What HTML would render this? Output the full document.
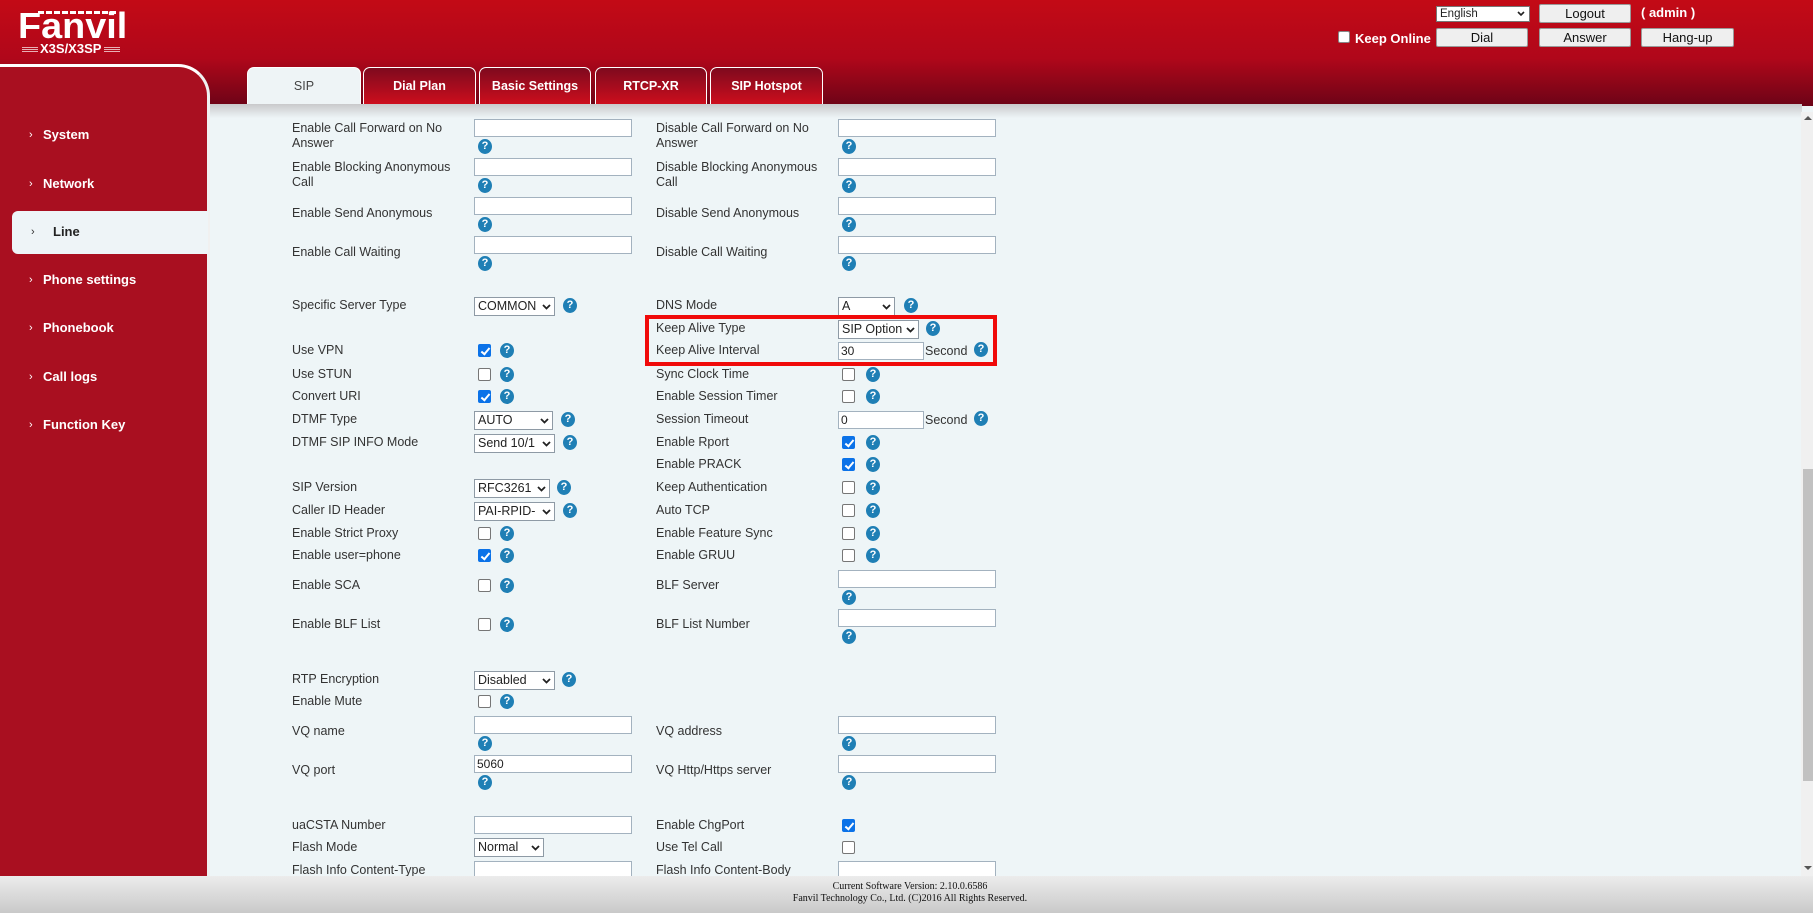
<!DOCTYPE html>
<html><head><meta charset="utf-8"><style>
*{box-sizing:border-box;margin:0;padding:0}
body{width:1813px;height:913px;overflow:hidden;position:relative;background:#eef5f7;font-family:"Liberation Sans",sans-serif}
.a{position:absolute}
.hdr{left:0;top:0;width:1813px;height:106px;background:linear-gradient(to bottom,#c30a16 0%,#b0071a 55%,#6c0417 100%)}
.band{left:208px;top:104px;width:1594px;height:14px;background:linear-gradient(to bottom,#c9c9cb,#eef5f7)}
.side{left:0;top:64px;width:210px;height:812px;background:#a90f20;border-top:3px solid #fff;border-right:3px solid #f0f0f0;border-top-right-radius:32px}
.nav{position:absolute;left:43px;color:#fff;font-weight:bold;font-size:13px}
.chev{position:absolute;left:29px;color:#fff;font-size:11px}
.tab{position:absolute;top:67px;height:39px;border:1px solid #fff;border-bottom:none;border-radius:7px 7px 0 0;background:linear-gradient(to bottom,#7e0a1e,#d10e1d);color:#fff;font-weight:bold;font-size:12.5px;text-align:center;line-height:37px}
.tab.on{background:#eef4f6;color:#444;font-weight:normal}
.L{position:absolute;font-size:12.5px;color:#333;line-height:15px;white-space:nowrap}
.I{position:absolute;width:158px;height:18px;background:#fff;border:1px solid #a3b2bf;font-size:12px;padding-left:2px;line-height:16px;color:#222}
.S{position:absolute;height:19px;background:#fff;border:1px solid #8e9aa5;font-size:12.5px;padding-left:3px;line-height:17px;color:#222;overflow:hidden;white-space:nowrap}
.S svg{position:absolute;right:3px;top:6px}
.C{position:absolute;width:13px;height:13px;border:1px solid #767676;border-radius:2px;background:#fff}
.C.k{background:#0b72e8;border-color:#0b72e8}
.C.k:after{content:"";position:absolute;left:3.5px;top:0.5px;width:3px;height:7px;border:solid #fff;border-width:0 2px 2px 0;transform:rotate(40deg)}
.H{position:absolute;width:14px;height:15px;border-radius:50%;background:#1f7fb5;color:#fff;font-size:11px;font-weight:bold;text-align:center;line-height:15px}
.btn{position:absolute;height:19px;background:#efefef;border:1px solid #9a9a9a;border-radius:2px;font-size:13px;text-align:center;line-height:17px;color:#111}
</style></head><body>
<div class="a hdr"></div>
<!-- logo -->
<div class="a" style="left:38px;top:11px;width:80px;height:3px;background:repeating-linear-gradient(to right,#fff 0 6px,transparent 6px 8px)"></div>
<div class="a" style="left:18px;top:6px;color:#fff;font-weight:bold;font-size:36px;line-height:40px;transform:scaleX(1.05);transform-origin:left">Fanvil</div>
<div class="a" style="left:22px;top:47px;width:16px;height:5px;background:repeating-linear-gradient(to bottom,#e8b0b5 0 1px,transparent 1px 2px)"></div>
<div class="a" style="left:40px;top:42px;color:#fff;font-weight:bold;font-size:13px;line-height:14px">X3S/X3SP</div>
<div class="a" style="left:104px;top:47px;width:16px;height:5px;background:repeating-linear-gradient(to bottom,#e8b0b5 0 1px,transparent 1px 2px)"></div>
<!-- header right -->
<div class="a" style="left:1436px;top:6px;width:94px;height:16px;background:#fff;border:1px solid #777;font-size:11.5px;line-height:14px;padding-left:3px;color:#222">English<svg style="position:absolute;right:4px;top:4px" width="8" height="6"><path d="M1 1l3 3 3-3" stroke="#222" stroke-width="1.6" fill="none"/></svg></div>
<div class="btn" style="left:1539px;top:4px;width:92px">Logout</div>
<div class="a" style="left:1641px;top:5px;color:#fff;font-weight:bold;font-size:13px">( admin )</div>
<div class="a" style="left:1338px;top:31px;width:12px;height:12px;background:#fff;border:1px solid #888;border-radius:2px"></div>
<div class="a" style="left:1355px;top:31px;color:#fff;font-weight:bold;font-size:13px">Keep Online</div>
<div class="btn" style="left:1436px;top:28px;width:92px">Dial</div>
<div class="btn" style="left:1539px;top:28px;width:92px">Answer</div>
<div class="btn" style="left:1641px;top:28px;width:93px">Hang-up</div>
<!-- tabs -->
<div class="tab on" style="left:247px;width:114px">SIP</div>
<div class="tab" style="left:363px;width:113px">Dial Plan</div>
<div class="tab" style="left:479px;width:112px">Basic Settings</div>
<div class="tab" style="left:595px;width:112px">RTCP-XR</div>
<div class="tab" style="left:710px;width:113px">SIP Hotspot</div>
<div class="a band"></div>
<!-- sidebar -->
<div class="a side"></div>
<div class="a" style="left:12px;top:211px;width:196px;height:43px;background:#eef4f7;border-radius:6px 0 0 6px"></div>
<span class="chev" style="top:129px">›</span><span class="nav" style="top:127px">System</span>
<span class="chev" style="top:178px">›</span><span class="nav" style="top:176px">Network</span>
<span class="chev" style="top:226px;color:#333;left:31px">›</span><span class="nav" style="top:224px;color:#222;left:53px">Line</span>
<span class="chev" style="top:274px">›</span><span class="nav" style="top:272px">Phone settings</span>
<span class="chev" style="top:322px">›</span><span class="nav" style="top:320px">Phonebook</span>
<span class="chev" style="top:371px">›</span><span class="nav" style="top:369px">Call logs</span>
<span class="chev" style="top:419px">›</span><span class="nav" style="top:417px">Function Key</span>

<!-- content -->
<div class="L" style="left:292px;top:121px">Enable Call Forward on No<br>Answer</div>
<div class="I" style="left:474px;top:119px"></div><div class="H" style="left:478px;top:139px">?</div>
<div class="L" style="left:656px;top:121px">Disable Call Forward on No<br>Answer</div>
<div class="I" style="left:838px;top:119px"></div><div class="H" style="left:842px;top:139px">?</div>

<div class="L" style="left:292px;top:160px">Enable Blocking Anonymous<br>Call</div>
<div class="I" style="left:474px;top:158px"></div><div class="H" style="left:478px;top:178px">?</div>
<div class="L" style="left:656px;top:160px">Disable Blocking Anonymous<br>Call</div>
<div class="I" style="left:838px;top:158px"></div><div class="H" style="left:842px;top:178px">?</div>

<div class="L" style="left:292px;top:206px">Enable Send Anonymous</div>
<div class="I" style="left:474px;top:197px"></div><div class="H" style="left:478px;top:217px">?</div>
<div class="L" style="left:656px;top:206px">Disable Send Anonymous</div>
<div class="I" style="left:838px;top:197px"></div><div class="H" style="left:842px;top:217px">?</div>

<div class="L" style="left:292px;top:245px">Enable Call Waiting</div>
<div class="I" style="left:474px;top:236px"></div><div class="H" style="left:478px;top:256px">?</div>
<div class="L" style="left:656px;top:245px">Disable Call Waiting</div>
<div class="I" style="left:838px;top:236px"></div><div class="H" style="left:842px;top:256px">?</div>

<div class="L" style="left:292px;top:298px">Specific Server Type</div>
<div class="S" style="left:474px;top:297px;width:81px">COMMON<svg width="9" height="6"><path d="M1 1l3.5 3.5L8 1" stroke="#222" stroke-width="1.8" fill="none"/></svg></div><div class="H" style="left:563px;top:298px">?</div>
<div class="L" style="left:656px;top:298px">DNS Mode</div>
<div class="S" style="left:838px;top:297px;width:57px">A<svg width="9" height="6"><path d="M1 1l3.5 3.5L8 1" stroke="#222" stroke-width="1.8" fill="none"/></svg></div><div class="H" style="left:904px;top:298px">?</div>

<div class="a" style="left:645px;top:315px;width:352px;height:51px;border:4px solid #f00a0a"></div>
<div class="L" style="left:656px;top:321px">Keep Alive Type</div>
<div class="S" style="left:838px;top:320px;width:81px">SIP Option<svg width="9" height="6"><path d="M1 1l3.5 3.5L8 1" stroke="#222" stroke-width="1.8" fill="none"/></svg></div><div class="H" style="left:926px;top:321px">?</div>

<div class="L" style="left:292px;top:343px">Use VPN</div>
<div class="C k" style="left:478px;top:344px"></div><div class="H" style="left:500px;top:343px">?</div>
<div class="L" style="left:656px;top:343px">Keep Alive Interval</div>
<div class="I" style="left:838px;top:342px;width:86px">30</div><div class="L" style="left:925px;top:344px">Second</div><div class="H" style="left:974px;top:342px">?</div>

<div class="L" style="left:292px;top:367px">Use STUN</div>
<div class="C" style="left:478px;top:368px"></div><div class="H" style="left:500px;top:367px">?</div>
<div class="L" style="left:656px;top:367px">Sync Clock Time</div>
<div class="C" style="left:842px;top:368px"></div><div class="H" style="left:866px;top:367px">?</div>

<div class="L" style="left:292px;top:389px">Convert URI</div>
<div class="C k" style="left:478px;top:390px"></div><div class="H" style="left:500px;top:389px">?</div>
<div class="L" style="left:656px;top:389px">Enable Session Timer</div>
<div class="C" style="left:842px;top:390px"></div><div class="H" style="left:866px;top:389px">?</div>

<div class="L" style="left:292px;top:412px">DTMF Type</div>
<div class="S" style="left:474px;top:411px;width:79px">AUTO<svg width="9" height="6"><path d="M1 1l3.5 3.5L8 1" stroke="#222" stroke-width="1.8" fill="none"/></svg></div><div class="H" style="left:561px;top:412px">?</div>
<div class="L" style="left:656px;top:412px">Session Timeout</div>
<div class="I" style="left:838px;top:411px;width:86px">0</div><div class="L" style="left:925px;top:413px">Second</div><div class="H" style="left:974px;top:411px">?</div>

<div class="L" style="left:292px;top:435px">DTMF SIP INFO Mode</div>
<div class="S" style="left:474px;top:434px;width:81px">Send 10/1<svg width="9" height="6"><path d="M1 1l3.5 3.5L8 1" stroke="#222" stroke-width="1.8" fill="none"/></svg></div><div class="H" style="left:563px;top:435px">?</div>
<div class="L" style="left:656px;top:435px">Enable Rport</div>
<div class="C k" style="left:842px;top:436px"></div><div class="H" style="left:866px;top:435px">?</div>

<div class="L" style="left:656px;top:457px">Enable PRACK</div>
<div class="C k" style="left:842px;top:458px"></div><div class="H" style="left:866px;top:457px">?</div>

<div class="L" style="left:292px;top:480px">SIP Version</div>
<div class="S" style="left:474px;top:479px;width:76px">RFC3261<svg width="9" height="6"><path d="M1 1l3.5 3.5L8 1" stroke="#222" stroke-width="1.8" fill="none"/></svg></div><div class="H" style="left:557px;top:480px">?</div>
<div class="L" style="left:656px;top:480px">Keep Authentication</div>
<div class="C" style="left:842px;top:481px"></div><div class="H" style="left:866px;top:480px">?</div>

<div class="L" style="left:292px;top:503px">Caller ID Header</div>
<div class="S" style="left:474px;top:502px;width:81px">PAI-RPID-<svg width="9" height="6"><path d="M1 1l3.5 3.5L8 1" stroke="#222" stroke-width="1.8" fill="none"/></svg></div><div class="H" style="left:563px;top:503px">?</div>
<div class="L" style="left:656px;top:503px">Auto TCP</div>
<div class="C" style="left:842px;top:504px"></div><div class="H" style="left:866px;top:503px">?</div>

<div class="L" style="left:292px;top:526px">Enable Strict Proxy</div>
<div class="C" style="left:478px;top:527px"></div><div class="H" style="left:500px;top:526px">?</div>
<div class="L" style="left:656px;top:526px">Enable Feature Sync</div>
<div class="C" style="left:842px;top:527px"></div><div class="H" style="left:866px;top:526px">?</div>

<div class="L" style="left:292px;top:548px">Enable user=phone</div>
<div class="C k" style="left:478px;top:549px"></div><div class="H" style="left:500px;top:548px">?</div>
<div class="L" style="left:656px;top:548px">Enable GRUU</div>
<div class="C" style="left:842px;top:549px"></div><div class="H" style="left:866px;top:548px">?</div>

<div class="L" style="left:292px;top:578px">Enable SCA</div>
<div class="C" style="left:478px;top:579px"></div><div class="H" style="left:500px;top:578px">?</div>
<div class="L" style="left:656px;top:578px">BLF Server</div>
<div class="I" style="left:838px;top:570px"></div><div class="H" style="left:842px;top:590px">?</div>

<div class="L" style="left:292px;top:617px">Enable BLF List</div>
<div class="C" style="left:478px;top:618px"></div><div class="H" style="left:500px;top:617px">?</div>
<div class="L" style="left:656px;top:617px">BLF List Number</div>
<div class="I" style="left:838px;top:609px"></div><div class="H" style="left:842px;top:629px">?</div>

<div class="L" style="left:292px;top:672px">RTP Encryption</div>
<div class="S" style="left:474px;top:671px;width:81px">Disabled<svg width="9" height="6"><path d="M1 1l3.5 3.5L8 1" stroke="#222" stroke-width="1.8" fill="none"/></svg></div><div class="H" style="left:562px;top:672px">?</div>

<div class="L" style="left:292px;top:694px">Enable Mute</div>
<div class="C" style="left:478px;top:695px"></div><div class="H" style="left:500px;top:694px">?</div>

<div class="L" style="left:292px;top:724px">VQ name</div>
<div class="I" style="left:474px;top:716px"></div><div class="H" style="left:478px;top:736px">?</div>
<div class="L" style="left:656px;top:724px">VQ address</div>
<div class="I" style="left:838px;top:716px"></div><div class="H" style="left:842px;top:736px">?</div>

<div class="L" style="left:292px;top:763px">VQ port</div>
<div class="I" style="left:474px;top:755px">5060</div><div class="H" style="left:478px;top:775px">?</div>
<div class="L" style="left:656px;top:763px">VQ Http/Https server</div>
<div class="I" style="left:838px;top:755px"></div><div class="H" style="left:842px;top:775px">?</div>

<div class="L" style="left:292px;top:818px">uaCSTA Number</div>
<div class="I" style="left:474px;top:816px"></div>
<div class="L" style="left:656px;top:818px">Enable ChgPort</div>
<div class="C k" style="left:842px;top:819px"></div>

<div class="L" style="left:292px;top:840px">Flash Mode</div>
<div class="S" style="left:474px;top:838px;width:70px">Normal<svg width="9" height="6"><path d="M1 1l3.5 3.5L8 1" stroke="#222" stroke-width="1.8" fill="none"/></svg></div>
<div class="L" style="left:656px;top:840px">Use Tel Call</div>
<div class="C" style="left:842px;top:841px"></div>

<div class="L" style="left:292px;top:863px">Flash Info Content-Type</div>
<div class="I" style="left:474px;top:861px"></div>
<div class="L" style="left:656px;top:863px">Flash Info Content-Body</div>
<div class="I" style="left:838px;top:861px"></div>

<!-- scrollbar -->
<div class="a" style="left:1801px;top:112px;width:12px;height:764px;background:#f0f0f0"></div>
<div class="a" style="left:1803px;top:469px;width:10px;height:312px;background:#c1c1c1"></div>
<div class="a" style="left:1804px;top:116px;width:0;height:0;border-left:4px solid transparent;border-right:4px solid transparent;border-bottom:4px solid #555"></div>
<div class="a" style="left:1804px;top:866px;width:0;height:0;border-left:4px solid transparent;border-right:4px solid transparent;border-top:4px solid #555"></div>

<!-- footer -->
<div class="a" style="left:0;top:876px;width:1813px;height:37px;background:linear-gradient(to bottom,#ececec,#c9c9c9)"></div>
<div class="a" style="left:0;top:881px;width:1820px;text-align:center;font-family:'Liberation Serif',serif;font-size:10px;line-height:12px;color:#111">Current Software Version: 2.10.0.6586<br>Fanvil Technology Co., Ltd. (C)2016 All Rights Reserved.</div>
</body></html>
